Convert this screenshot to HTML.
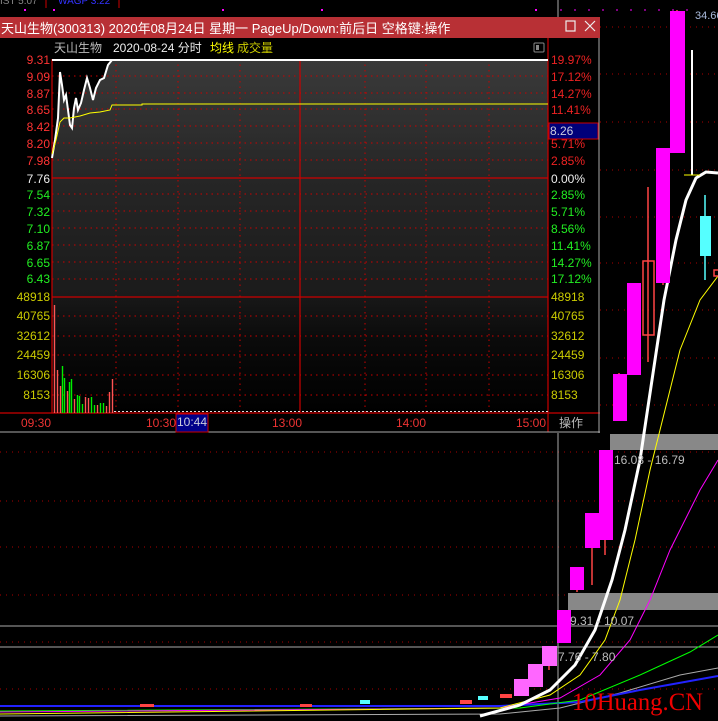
<!DOCTYPE html>
<html><head><meta charset="utf-8"><style>
html,body{margin:0;padding:0;background:#000;width:718px;height:721px;overflow:hidden}
svg{display:block}
text{font-family:"Liberation Sans","Noto Sans CJK SC",sans-serif}
</style></head><body>
<svg width="718" height="721" viewBox="0 0 718 721" xmlns="http://www.w3.org/2000/svg">
<rect width="718" height="721" fill="#000"/>
<g stroke="#a00" stroke-width="1" stroke-dasharray="1,5">
<line x1="600" y1="27" x2="718" y2="27"/><line x1="600" y1="74" x2="718" y2="74"/>
<line x1="600" y1="122" x2="718" y2="122"/><line x1="600" y1="170" x2="718" y2="170"/>
<line x1="600" y1="217" x2="718" y2="217"/><line x1="600" y1="263" x2="718" y2="263"/>
<line x1="600" y1="310" x2="718" y2="310"/><line x1="600" y1="358" x2="718" y2="358"/>
<line x1="600" y1="405" x2="718" y2="405"/>
<line x1="0" y1="452" x2="718" y2="452"/><line x1="0" y1="501" x2="718" y2="501"/>
<line x1="0" y1="547" x2="718" y2="547"/><line x1="0" y1="595" x2="718" y2="595"/>
<line x1="0" y1="642" x2="718" y2="642"/><line x1="0" y1="689" x2="718" y2="689"/>
</g>
<g fill="#f0f">
<rect x="535" y="9" width="2" height="2"/><rect x="24" y="9" width="2" height="2"/><rect x="53" y="9" width="2" height="2"/><rect x="222" y="9" width="2" height="2"/><rect x="321" y="9" width="2" height="2"/>
</g>
<line x1="560" y1="10" x2="700" y2="10" stroke="#f0f" stroke-dasharray="2,12"/>
<text x="0" y="4" font-size="10" fill="#888">IST 5.07</text>
<text x="58" y="4" font-size="10" fill="#33f">WAGP 3.22</text>
<line x1="46" y1="0" x2="46" y2="8" stroke="#c00"/><line x1="119" y1="0" x2="119" y2="8" stroke="#c00"/>
<line x1="558" y1="0" x2="558" y2="721" stroke="#aaa"/>
<line x1="0" y1="626" x2="718" y2="626" stroke="#aaa"/>
<line x1="0" y1="647" x2="718" y2="647" stroke="#aaa"/>
<rect x="610" y="434" width="108" height="16" fill="#888"/>
<rect x="568" y="593" width="150" height="17" fill="#888"/>
<polyline fill="none" stroke="#aaa" stroke-width="1" points="0,716 500,714 560,708 620,693 680,675 718,668"/>
<polyline fill="none" stroke="#22f" stroke-width="2" points="0,706 500,706 580,702 640,690 718,676"/>
<polyline fill="none" stroke="#0f0" stroke-width="1" points="0,711 520,708 580,700 640,675 690,652 718,635"/>
<polyline fill="none" stroke="#f0f" stroke-width="1" points="0,712 500,708 560,698 600,675 630,640 650,600 670,550 700,490 718,460"/>
<polyline fill="none" stroke="#ff0" stroke-width="1" points="0,714 500,708 550,695 580,675 605,640 620,600 635,540 650,470 665,410 680,350 700,300 718,276"/>
<polyline fill="none" stroke="#fff" stroke-width="3" points="480,716 520,705 550,690 575,665 595,630 612,580 625,530 640,460 652,380 664,300 676,240 686,200 696,178 706,172 718,173"/>
<g stroke="#f44" stroke-width="1.5">
<line x1="677" y1="10" x2="677" y2="153"/><line x1="663" y1="148" x2="663" y2="285"/>
<line x1="648" y1="187" x2="648" y2="362"/><line x1="633" y1="283" x2="633" y2="375"/>
<line x1="619" y1="373" x2="619" y2="420"/><line x1="605" y1="450" x2="605" y2="555"/>
<line x1="592" y1="513" x2="592" y2="585"/><line x1="577" y1="567" x2="577" y2="592"/>
<line x1="549" y1="646" x2="549" y2="670"/>
</g>
<rect x="670" y="11" width="15" height="142" fill="#f0f"/>
<rect x="656" y="148" width="14" height="135" fill="#f0f"/>
<rect x="643" y="261" width="11" height="74" fill="none" stroke="#f44" stroke-width="1.5"/>
<rect x="627" y="283" width="14" height="92" fill="#f0f"/>
<rect x="613" y="374" width="14" height="47" fill="#f0f"/>
<rect x="599" y="450" width="14" height="90" fill="#f0f"/>
<rect x="585" y="513" width="15" height="35" fill="#f0f"/>
<rect x="570" y="567" width="14" height="23" fill="#f0f"/>
<rect x="557" y="610" width="14" height="33" fill="#f0f"/>
<rect x="542" y="646" width="15" height="20" fill="#f6f"/>
<rect x="528" y="664" width="15" height="23" fill="#f6f"/>
<rect x="514" y="679" width="15" height="17" fill="#f6f"/>
<line x1="705" y1="195" x2="705" y2="280" stroke="#5ff" stroke-width="1.5"/>
<rect x="700" y="216" width="11" height="40" fill="#5ff"/>
<rect x="714" y="270" width="6" height="6" fill="none" stroke="#f44" stroke-width="1.5"/>
<line x1="692" y1="50" x2="692" y2="175" stroke="#fff" stroke-width="2"/>
<line x1="684" y1="175" x2="700" y2="175" stroke="#ff0"/>
<g fill="#f44"><rect x="140" y="704" width="14" height="3"/><rect x="300" y="704" width="12" height="3"/><rect x="460" y="700" width="12" height="4"/><rect x="500" y="694" width="12" height="4"/></g>
<g fill="#5ff"><rect x="360" y="700" width="10" height="4"/><rect x="478" y="696" width="10" height="4"/></g>
<text x="695" y="19" font-size="11" fill="#abd">34.66</text>
<text x="614" y="464" font-size="12" fill="#bbb">16.08 - 16.79</text>
<text x="570" y="625" font-size="12" fill="#bbb">9.31 - 10.07</text>
<text x="558" y="661" font-size="12" fill="#bbb">7.76 - 7.80</text>
<text x="572" y="710" font-size="25" fill="#e00" style="font-family:'Liberation Serif',serif" textLength="131" lengthAdjust="spacingAndGlyphs">10Huang.CN</text>

<!-- POPUP -->
<rect x="0" y="17" width="600" height="416" fill="#000"/>
<rect x="0" y="17" width="600" height="21" fill="#b83035"/>
<text x="1" y="33" font-size="13" fill="#fff">天山生物(300313) 2020年08月24日 星期一 PageUp/Down:前后日 空格键:操作</text>
<rect x="566" y="21" width="9" height="10" fill="none" stroke="#eee" stroke-width="1.2"/>
<path d="M585 21 L595 31 M595 21 L585 31" stroke="#eee" stroke-width="1.2"/>
<text x="54" y="52" font-size="12" fill="#bbb">天山生物</text>
<text x="113" y="52" font-size="12" fill="#eee">2020-08-24 分时</text>
<text x="210" y="52" font-size="12" fill="#ff0">均线</text>
<text x="237" y="52" font-size="12" fill="#cc0">成交量</text>
<rect x="534" y="43" width="10" height="9" rx="1" fill="none" stroke="#888"/><rect x="536" y="45" width="3" height="5" fill="#888"/>
<defs>
<linearGradient id="pg" x1="0" y1="0" x2="0" y2="1"><stop offset="0" stop-color="#3a3a3a"/><stop offset="0.5" stop-color="#262626"/><stop offset="1" stop-color="#1b1b1b"/></linearGradient>
<linearGradient id="vg" x1="0" y1="0" x2="0" y2="1"><stop offset="0" stop-color="#181818"/><stop offset="0.4" stop-color="#0a0a0a"/><stop offset="1" stop-color="#000"/></linearGradient>
</defs>
<rect x="52" y="59" width="496" height="237" fill="url(#pg)"/>
<rect x="52" y="296" width="496" height="117" fill="url(#vg)"/>
<polygon fill="#000" points="52,59 112,59 108,65 104,78 100,80 96,88 93,100 90,88 87,78 84,90 81,103 78,110 76,98 74,108 72,128 70,125 68,110 66,95 64,100 62,85 60,72 58,118 55,140 52,158"/>
<g stroke="#c00" stroke-dasharray="1.5,4">
<line x1="52" y1="76" x2="548" y2="76"/><line x1="52" y1="93" x2="548" y2="93"/><line x1="52" y1="109" x2="548" y2="109"/>
<line x1="52" y1="126" x2="548" y2="126"/><line x1="52" y1="143" x2="548" y2="143"/><line x1="52" y1="160" x2="548" y2="160"/>
<line x1="52" y1="194" x2="548" y2="194"/><line x1="52" y1="211" x2="548" y2="211"/><line x1="52" y1="228" x2="548" y2="228"/>
<line x1="52" y1="245" x2="548" y2="245"/><line x1="52" y1="262" x2="548" y2="262"/><line x1="52" y1="279" x2="548" y2="279"/>
<line x1="52" y1="316" x2="548" y2="316"/><line x1="52" y1="336" x2="548" y2="336"/><line x1="52" y1="355" x2="548" y2="355"/>
<line x1="52" y1="375" x2="548" y2="375"/><line x1="52" y1="395" x2="548" y2="395"/>
<line x1="116" y1="59" x2="116" y2="413"/><line x1="178" y1="59" x2="178" y2="413"/><line x1="240" y1="59" x2="240" y2="413"/>
<line x1="365" y1="59" x2="365" y2="413"/><line x1="426" y1="59" x2="426" y2="413"/><line x1="489" y1="59" x2="489" y2="413"/>
</g>
<g stroke="#c00" stroke-width="1.2">
<line x1="52" y1="178" x2="548" y2="178"/><line x1="52" y1="297" x2="548" y2="297"/>
<line x1="300" y1="59" x2="300" y2="413"/>
<line x1="52" y1="59" x2="52" y2="413"/><line x1="548" y1="38" x2="548" y2="432"/>
<line x1="0" y1="413" x2="600" y2="413"/>
</g>
<line x1="599" y1="38" x2="599" y2="433" stroke="#aaa"/>
<line x1="0" y1="432" x2="600" y2="432" stroke="#aaa"/>
<line x1="52" y1="60" x2="548" y2="60" stroke="#fff" stroke-width="2"/>
<polyline fill="none" stroke="#fff" stroke-width="2" points="52,158 55,140 58,118 60,72 62,85 64,100 66,95 68,110 70,125 72,128 74,108 76,98 78,110 81,103 84,90 87,78 90,88 93,100 96,88 100,80 104,78 108,65 112,60"/>
<polyline fill="none" stroke="#ff0" stroke-width="1" points="52,154 56,140 60,122 64,118 70,118 80,116 90,113 100,112 110,110 112,105 142,105 142,104 548,104"/>
<g stroke-width="1.4">
<line x1="54.5" y1="305" x2="54.5" y2="413" stroke="#f55"/><line x1="57.5" y1="370" x2="57.5" y2="413" stroke="#f55"/>
<line x1="60.5" y1="386" x2="60.5" y2="413" stroke="#f55"/><line x1="62.5" y1="366" x2="62.5" y2="413" stroke="#0e0"/>
<line x1="64.5" y1="378" x2="64.5" y2="413" stroke="#0e0"/><line x1="67.5" y1="391" x2="67.5" y2="413" stroke="#f55"/>
<line x1="69.5" y1="382" x2="69.5" y2="413" stroke="#0e0"/><line x1="71.5" y1="379" x2="71.5" y2="413" stroke="#0e0"/>
<line x1="74.5" y1="399" x2="74.5" y2="413" stroke="#f55"/><line x1="77.5" y1="395" x2="77.5" y2="413" stroke="#0e0"/>
<line x1="79.5" y1="396" x2="79.5" y2="413" stroke="#0e0"/><line x1="82.5" y1="404" x2="82.5" y2="413" stroke="#0e0"/>
<line x1="85.5" y1="397" x2="85.5" y2="413" stroke="#f55"/><line x1="88.5" y1="398" x2="88.5" y2="413" stroke="#f55"/>
<line x1="91.5" y1="397" x2="91.5" y2="413" stroke="#0e0"/><line x1="94.5" y1="405" x2="94.5" y2="413" stroke="#0e0"/>
<line x1="97.5" y1="405" x2="97.5" y2="413" stroke="#f55"/><line x1="100.5" y1="403" x2="100.5" y2="413" stroke="#0e0"/>
<line x1="103.5" y1="403" x2="103.5" y2="413" stroke="#0e0"/><line x1="106.5" y1="406" x2="106.5" y2="413" stroke="#f55"/>
<line x1="109.5" y1="392" x2="109.5" y2="413" stroke="#f55"/><line x1="112.5" y1="379" x2="112.5" y2="413" stroke="#f55"/>
</g>
<line x1="114" y1="411.5" x2="548" y2="411.5" stroke="#ddd" stroke-dasharray="2,2"/>
<g font-size="12" text-anchor="end">
<g fill="#f33"><text x="50" y="64">9.31</text><text x="50" y="81">9.09</text><text x="50" y="98">8.87</text><text x="50" y="114">8.65</text><text x="50" y="131">8.42</text><text x="50" y="148">8.20</text><text x="50" y="165">7.98</text></g>
<text x="50" y="183" fill="#eee">7.76</text>
<g fill="#2e2"><text x="50" y="199">7.54</text><text x="50" y="216">7.32</text><text x="50" y="233">7.10</text><text x="50" y="250">6.87</text><text x="50" y="267">6.65</text><text x="50" y="283">6.43</text></g>
<g fill="#cc0"><text x="50" y="301">48918</text><text x="50" y="320">40765</text><text x="50" y="340">32612</text><text x="50" y="359">24459</text><text x="50" y="379">16306</text><text x="50" y="399">8153</text></g>
</g>
<g font-size="12">
<g fill="#e22"><text x="551" y="64">19.97%</text><text x="551" y="81">17.12%</text><text x="551" y="98">14.27%</text><text x="551" y="114">11.41%</text><text x="551" y="148">5.71%</text><text x="551" y="165">2.85%</text></g>
<text x="551" y="183" fill="#eee">0.00%</text>
<g fill="#2e2"><text x="551" y="199">2.85%</text><text x="551" y="216">5.71%</text><text x="551" y="233">8.56%</text><text x="551" y="250">11.41%</text><text x="551" y="267">14.27%</text><text x="551" y="283">17.12%</text></g>
<g fill="#cc0"><text x="551" y="301">48918</text><text x="551" y="320">40765</text><text x="551" y="340">32612</text><text x="551" y="359">24459</text><text x="551" y="379">16306</text><text x="551" y="399">8153</text></g>
<rect x="549" y="123" width="49" height="16" fill="#00007a" stroke="#c00"/>
<text x="550" y="135" fill="#ccd">8.26</text>
<text x="559" y="427" fill="#bbb">操作</text>
</g>
<g font-size="12" fill="#e33">
<text x="21" y="427">09:30</text><text x="146" y="427">10:30</text><text x="272" y="427">13:00</text><text x="396" y="427">14:00</text><text x="516" y="427">15:00</text>
</g>
<rect x="176" y="414" width="32" height="18" fill="#00008a" stroke="#c00"/>
<text x="177" y="426" font-size="12" fill="#ccd">10:44</text>
</svg>
</body></html>
